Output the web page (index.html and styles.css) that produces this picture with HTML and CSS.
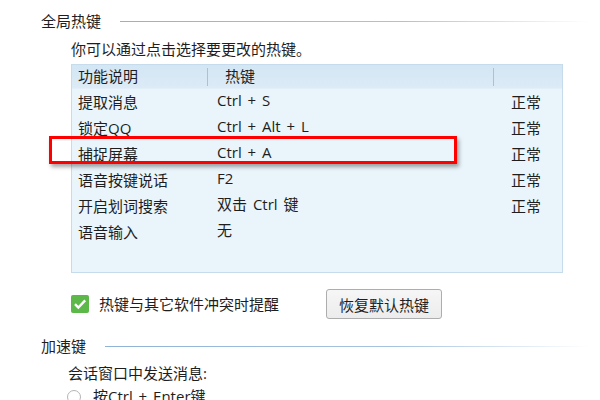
FILE: index.html
```html
<!DOCTYPE html>
<html lang="zh-CN">
<head>
  <meta charset="utf-8">
  <title>热键设置</title>
  <link rel="stylesheet" href="styles.css">
</head>
<body>
  <div class="panel">
    <div class="section-title">
      <span>全局热键</span>
      <i class="rule"></i>
    </div>
    <div class="section-body">
      <p class="hint">你可以通过点击选择要更改的热键。</p>
      <div class="table">
        <div class="table-head">
          <span class="col-name">功能说明</span>
          <i class="sep"></i>
          <span class="col-key">热键</span>
          <i class="sep sep-right"></i>
        </div>
        <div class="row"><span class="col-name">提取消息</span><span class="col-key">Ctrl + S</span><span class="col-state">正常</span></div>
        <div class="row"><span class="col-name">锁定QQ</span><span class="col-key">Ctrl + Alt + L</span><span class="col-state">正常</span></div>
        <div class="row"><span class="col-name">捕捉屏幕</span><span class="col-key">Ctrl + A</span><span class="col-state">正常</span></div>
        <div class="row"><span class="col-name">语音按键说话</span><span class="col-key">F2</span><span class="col-state">正常</span></div>
        <div class="row"><span class="col-name">开启划词搜索</span><span class="col-key">双击 Ctrl 键</span><span class="col-state">正常</span></div>
        <div class="row"><span class="col-name">语音输入</span><span class="col-key">无</span><span class="col-state"></span></div>
      </div>
      <div class="options">
        <label class="check">
          <span class="check-box">
            <svg width="18" height="18" viewBox="0 0 18 18"><rect width="18" height="18" rx="2" fill="#5cb848"/><path d="M4 9.2l3.3 3.3L14.2 5.4" fill="none" stroke="#fff" stroke-width="2.4"/></svg>
          </span>
          热键与其它软件冲突时提醒
        </label>
        <button class="button" type="button">恢复默认热键</button>
      </div>
    </div>
    <div class="highlight"></div>

    <div class="section-title section-title-2">
      <span>加速键</span>
      <i class="rule"></i>
    </div>
    <div class="section-body">
      <p class="sub">会话窗口中发送消息:</p>
      <label class="radio"><span class="radio-dot"></span>按Ctrl + Enter键</label>
    </div>
  </div>
</body>
</html>
```

FILE: styles.css
```css
*, *::before, *::after {
  margin: 0;
  padding: 0;
  box-sizing: border-box;
}

body {
  background-color: #FFFFFF;
  color: #1E1E1E;
  font-family: "Open Sans", "Noto Sans CJK SC", sans-serif;
  font-size: 15px;
  line-height: 1;
  overflow: hidden;
}

.panel {
  position: relative;
  width: 600px;
  height: 400px;
  padding-top: 12px;
}

.section-title {
  display: flex;
  align-items: center;
  height: 18px;
  padding-left: 41px;
  padding-right: 10px;
}

.rule {
  flex: 1;
  height: 1px;
  margin-left: 19px;
  background: linear-gradient(to right, #8fb3d5 0%, #a7c4df 60%, #ffffff 100%);
}

.section-body {
  padding-left: 71px;
}

.hint {
  margin-top: 12px;
  height: 16px;
}

.table {
  margin-top: 6px;
  width: 492px;
  height: 209px;
  border: 1px solid #c6dbec;
  background-color: #eaf5fb;
}

.table-head {
  display: flex;
  align-items: center;
  height: 24px;
  background: linear-gradient(to bottom, #d3e6f4, #dcebf6);
  border-bottom: 1px solid #e3eff8;
}

.sep {
  width: 1px;
  height: 18px;
  background-color: #9fc4e4;
}

.sep-right {
  margin-left: 268px;
}

.table-head .col-name {
  width: 135px;
  padding-left: 6px;
}

.table-head .col-key {
  width: 17px;
  padding-left: 17px;
  white-space: nowrap;
}

.row {
  display: flex;
  align-items: center;
  height: 26px;
}

.row .col-name {
  width: 145px;
  padding-left: 6px;
  padding-top: 1px;
}

.row .col-key {
  width: 294px;
  padding-bottom: 3px;
  word-spacing: 2px;
}

.row .col-state {
  padding-top: 1px;
}

.highlight {
  position: absolute;
  left: 49px;
  top: 136px;
  width: 408px;
  height: 28px;
  border: 3px solid #ff0000;
  box-shadow: 2px 3px 4px rgba(0, 0, 0, 0.35);
}

.options {
  display: flex;
  align-items: center;
  margin-top: 16px;
}

.check {
  display: flex;
  align-items: center;
  width: 255px;
}

.check-box {
  display: flex;
  margin-right: 10px;
}

.button {
  width: 116px;
  height: 30px;
  border: 1px solid #adadad;
  border-radius: 3px;
  background: linear-gradient(to bottom, #f6f6f6, #ececec);
  color: #1E1E1E;
  font-family: inherit;
  font-size: 15px;
}

.section-title-2 {
  margin-top: 18px;
}

.section-body .sub {
  margin-top: 11px;
  margin-left: -3px;
}

.radio {
  display: flex;
  align-items: center;
  margin-top: 8px;
  margin-left: -4px;
  word-spacing: 2px;
}

.radio-dot {
  width: 14px;
  height: 14px;
  border: 1px solid #b5b5b5;
  border-radius: 50%;
  margin-right: 12px;
}
```
